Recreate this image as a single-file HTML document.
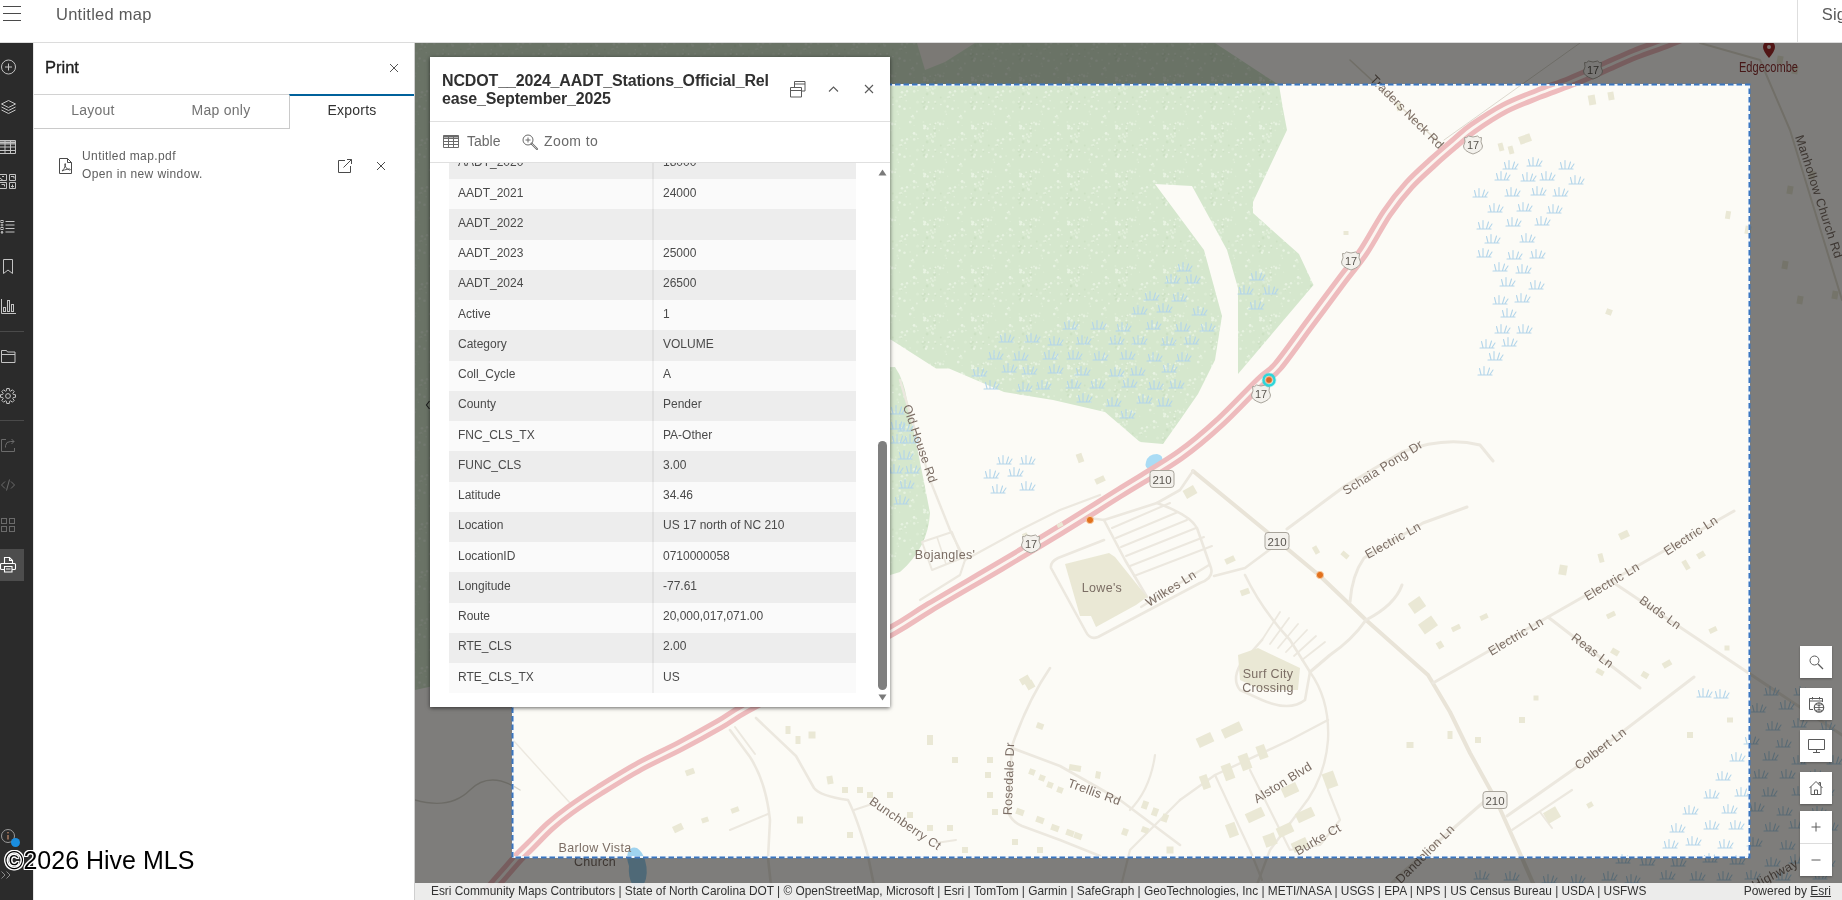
<!DOCTYPE html>
<html lang="en">
<head>
<meta charset="utf-8">
<title>Untitled map</title>
<style>
*{box-sizing:border-box;margin:0;padding:0}
html,body{width:1842px;height:900px;overflow:hidden;background:#fff}
body{position:relative;will-change:transform;font-family:"Liberation Sans",sans-serif;color:#4a4a4a;font-size:14px}
.abs{position:absolute}
/* header */
#hdr{left:0;top:0;width:1842px;height:43px;background:#fff;border-bottom:1px solid #dcdcdc}
#hdr .ttl{left:56px;top:4px;font-size:16.5px;line-height:20px;color:#5a5a5a;white-space:nowrap;letter-spacing:.25px}
#hdr .div{left:1797px;top:0;width:1px;height:42px;background:#dedede}
#hdr .sig{left:1821.7px;top:4px;font-size:16.5px;line-height:20px;color:#5a5a5a;white-space:nowrap;letter-spacing:.25px}
/* rail */
#rail{left:0;top:43px;width:33px;height:857px;background:#2b2b2b}
#rail svg{position:absolute;left:0;overflow:visible}
#rail .sep{position:absolute;left:0;width:24px;height:1px;background:#4a4a4a}
#rail .act{position:absolute;left:0;top:506px;width:24px;height:32px;background:#4d4d4d}
/* print panel */
#panel{left:33px;top:43px;width:382px;height:857px;background:#fff;border-right:1px solid #cfcfcf;border-left:1px solid #e6e6e6}
#panel .h{left:11px;top:14px;font-size:16.5px;line-height:20px;color:#1f1f1f;-webkit-text-stroke:.35px #1f1f1f}
#panel .hb{left:0;top:51px;width:380px;height:1px;background:#d2d2d2}
.tab{position:absolute;top:52px;height:34px;font-size:14px;line-height:31px;text-align:center;color:#727272;letter-spacing:.25px;border-bottom:1px solid #cacaca}
.tab.on{color:#323232;border-bottom:none;border-left:1px solid #cacaca;border-top:2px solid #00619b;top:51px;height:35px;line-height:28px}
#panel .f1{left:48px;top:105px;font-size:12px;line-height:16px;color:#5e5e5e;white-space:nowrap;letter-spacing:.41px}
#panel .f2{left:48px;top:123px;font-size:12px;line-height:16px;color:#5e5e5e;white-space:nowrap;letter-spacing:.39px}
/* map */
#map{left:415px;top:43px;width:1427px;height:857px;overflow:hidden;background:#faf8f1}
#attr{left:415px;top:883px;width:1427px;height:17px;background:rgba(255,255,255,.85);font-size:12px;line-height:17px;color:#323232;white-space:nowrap}
#attr .l{position:absolute;left:16px;top:0;font-size:11.88px}
#attr .r{position:absolute;right:11px;top:0}
#attr u{text-decoration:underline}
.mbtn{position:absolute;left:1800px;width:32px;height:32px;background:#fff;box-shadow:0 1px 2px rgba(0,0,0,.3)}
.mbtn svg{position:absolute;left:8px;top:8px}
/* popup */
#pop{left:430px;top:57px;width:460px;height:650px;background:#fff;box-shadow:0 1px 4px rgba(0,0,0,.6)}
#pop .t{left:12px;top:14.7px;width:340px;font-size:16px;line-height:18.3px;font-weight:bold;color:#303030;white-space:nowrap;letter-spacing:-.15px}
#pop .d1{left:0;top:64px;width:460px;height:1px;background:#e0e0e0}
#pop .d2{left:0;top:105px;width:460px;height:1px;background:#e0e0e0}
#pop .act{top:74px;font-size:14px;line-height:20px;color:#6a6a6a}
#tbl{left:19px;top:106px;width:407px;height:530px;overflow:hidden}
#tbl .in{position:absolute;left:0;top:-14.25px;width:407px}
.row{position:relative;height:30.25px;background:#fafafa;font-size:12px;line-height:30px;color:#4a4a4a;white-space:nowrap}
.row.g{background:#ededed}
.row b{font-weight:normal;position:absolute;left:9px;top:-1.5px}
.row i{font-style:normal;position:absolute;left:214px;top:-1.5px}
.row:after{content:"";position:absolute;left:203px;top:0;width:2px;height:100%;background:rgba(0,0,0,.05)}
#sb{left:445px;top:106px;width:15px;height:544px;background:#fff}
#sb .th{position:absolute;left:3px;top:278px;width:9px;height:249px;border-radius:5px;background:#7f7f7f}
#wm{left:5px;top:846px;font-size:25px;line-height:28px;color:#000;white-space:nowrap;letter-spacing:0;text-shadow:1px 0 0 #fff,-1px 0 0 #fff,0 1px 0 #fff,0 -1px 0 #fff,1px 1px 0 #fff,-1px -1px 0 #fff,1px -1px 0 #fff,-1px 1px 0 #fff}
</style>
</head>
<body>
<!-- MAP -->
<div id="map" class="abs">
<!--MAPSVG-->
<svg width="1427" height="857" viewBox="415 43 1427 857" style="position:absolute;left:0;top:0;font-family:'Liberation Sans',sans-serif">
<defs>
<pattern id="fp" width="48" height="48" patternUnits="userSpaceOnUse"><rect width="48" height="48" fill="#d5e7cd"/><circle cx="11.4" cy="26.1" r="1.0" fill="#dcecd4"/><circle cx="22.8" cy="27.9" r="1.2" fill="#cde1c4"/><circle cx="12.4" cy="11.2" r="1.5" fill="#cde1c4"/><circle cx="26.0" cy="26.4" r="1.0" fill="#e3f0dc"/><circle cx="11.1" cy="7.3" r="1.4" fill="#cde1c4"/><circle cx="35.6" cy="32.2" r="0.8" fill="#dcecd4"/><circle cx="2.1" cy="37.4" r="1.4" fill="#e9f4e3"/><circle cx="22.7" cy="34.5" r="1.4" fill="#cde1c4"/><circle cx="19.0" cy="38.4" r="1.1" fill="#e3f0dc"/><circle cx="42.2" cy="4.7" r="0.8" fill="#e3f0dc"/><circle cx="12.4" cy="32.3" r="1.3" fill="#e9f4e3"/><circle cx="20.2" cy="40.0" r="1.2" fill="#dcecd4"/><circle cx="28.1" cy="28.0" r="1.4" fill="#e6f2e0"/><circle cx="41.1" cy="47.6" r="1.2" fill="#e3f0dc"/><circle cx="33.5" cy="15.7" r="1.1" fill="#dcecd4"/><circle cx="27.3" cy="34.3" r="0.9" fill="#dcecd4"/><circle cx="12.8" cy="6.0" r="1.1" fill="#cde1c4"/><circle cx="4.2" cy="38.4" r="1.0" fill="#e3f0dc"/><circle cx="1.0" cy="20.5" r="1.0" fill="#e6f2e0"/><circle cx="2.1" cy="29.5" r="0.7" fill="#dcecd4"/><circle cx="15.9" cy="42.3" r="1.5" fill="#dcecd4"/><circle cx="11.3" cy="1.7" r="0.7" fill="#e6f2e0"/><circle cx="28.8" cy="1.5" r="0.9" fill="#cde1c4"/><circle cx="14.0" cy="12.6" r="1.3" fill="#e9f4e3"/><circle cx="15.1" cy="46.0" r="1.4" fill="#cde1c4"/><circle cx="18.1" cy="41.8" r="1.0" fill="#dcecd4"/><circle cx="32.7" cy="4.9" r="1.5" fill="#dcecd4"/><circle cx="13.0" cy="30.4" r="1.3" fill="#e9f4e3"/><circle cx="21.0" cy="12.4" r="0.9" fill="#e9f4e3"/><circle cx="0.5" cy="19.9" r="1.2" fill="#e6f2e0"/><circle cx="18.1" cy="28.3" r="0.8" fill="#e9f4e3"/><circle cx="22.4" cy="32.6" r="1.0" fill="#e9f4e3"/><circle cx="35.4" cy="1.1" r="0.7" fill="#e6f2e0"/><circle cx="46.2" cy="12.1" r="1.1" fill="#dcecd4"/><circle cx="28.9" cy="8.5" r="0.8" fill="#e9f4e3"/><circle cx="40.5" cy="12.7" r="1.3" fill="#e6f2e0"/><circle cx="37.1" cy="1.3" r="1.2" fill="#e3f0dc"/><circle cx="14.9" cy="10.7" r="1.3" fill="#e3f0dc"/><circle cx="15.7" cy="32.5" r="1.2" fill="#e6f2e0"/><circle cx="4.9" cy="15.5" r="1.0" fill="#e3f0dc"/><circle cx="21.0" cy="41.1" r="0.8" fill="#e9f4e3"/><circle cx="35.6" cy="10.5" r="1.2" fill="#e9f4e3"/><circle cx="10.8" cy="5.8" r="1.1" fill="#e3f0dc"/><circle cx="15.1" cy="40.1" r="1.2" fill="#e9f4e3"/><circle cx="16.3" cy="39.7" r="0.8" fill="#dcecd4"/><circle cx="16.6" cy="6.2" r="0.9" fill="#e9f4e3"/><circle cx="22.3" cy="30.4" r="0.9" fill="#dcecd4"/><circle cx="19.7" cy="44.2" r="0.8" fill="#e6f2e0"/><circle cx="22.9" cy="40.0" r="1.2" fill="#dcecd4"/><circle cx="20.8" cy="45.6" r="1.4" fill="#e3f0dc"/><circle cx="1.6" cy="21.9" r="1.3" fill="#dcecd4"/><circle cx="46.2" cy="26.1" r="1.4" fill="#e6f2e0"/><circle cx="41.2" cy="46.6" r="0.8" fill="#e3f0dc"/><circle cx="2.2" cy="43.4" r="1.3" fill="#e3f0dc"/><circle cx="43.0" cy="43.2" r="1.2" fill="#e6f2e0"/><circle cx="23.1" cy="5.8" r="1.1" fill="#e3f0dc"/><circle cx="31.8" cy="25.2" r="1.0" fill="#dcecd4"/><circle cx="5.5" cy="6.0" r="1.5" fill="#dcecd4"/><circle cx="22.9" cy="37.6" r="1.0" fill="#e3f0dc"/><circle cx="5.9" cy="42.6" r="0.8" fill="#e3f0dc"/><circle cx="38.0" cy="44.2" r="1.3" fill="#e6f2e0"/><circle cx="23.4" cy="27.4" r="1.0" fill="#e9f4e3"/><circle cx="11.9" cy="29.7" r="1.1" fill="#e6f2e0"/><circle cx="22.7" cy="37.3" r="0.7" fill="#e6f2e0"/><circle cx="37.2" cy="2.2" r="0.7" fill="#cde1c4"/><circle cx="46.8" cy="41.0" r="0.8" fill="#dcecd4"/><circle cx="23.5" cy="7.5" r="0.8" fill="#cde1c4"/><circle cx="31.1" cy="28.2" r="1.0" fill="#e3f0dc"/><circle cx="47.4" cy="20.6" r="0.8" fill="#e6f2e0"/><circle cx="34.4" cy="18.3" r="0.8" fill="#e3f0dc"/></pattern>
<g id="tf" fill="none" stroke="#b3d5ea" stroke-width="1.1" stroke-linecap="round"><path d="M-7 4h14M-4 3.500l-1.500-6M-1 3.500V-4.500M2.500 3.500l2-6.500M5 3.500l3-4.500"/></g>
<g id="sh17"><path d="M-8.5-6.5q2 1 4-1.5q4.5 2 9 0q2 2.500 4 1.500q-1.500 4.500 1 8.500q0 5-9.500 8q-9.500-3-9.500-8q2.500-4 1-8.500z" fill="#f3f1ec" stroke="#a9a59c" stroke-width="1"/><text x="0" y="4.500" font-size="11" text-anchor="middle" fill="#5a5650">17</text></g>
<g id="sh210"><rect x="-12" y="-8.500" width="24" height="17" rx="3" fill="#f3f1ec" stroke="#a9a59c" stroke-width="1"/><text x="0" y="4.500" font-size="11.500" text-anchor="middle" fill="#5a5650">210</text></g>
</defs>
<rect x="415" y="43" width="1427" height="857" fill="#fcfbf6"/>
<path d="M415 43H1215L1279 85L1283 109L1287 130L1253 202L1253 213L1299 254L1313.500 285L1238 374V288L1227 250L1192 186L1155 184L1204 250L1222 316L1215 360L1198 394L1180 420L1163 444L1140 442L1105 412L1053 400L1004 392L949 368.500L936 368.500L891.500 340L860 330V368L895 367Q904 380 907 400Q920 460 930 513Q928 548 900 572L760 615L415 690z" fill="url(#fp)"/>
<path d="M917 43L975 43L945 62L925 70z" fill="#f6f3ea"/>
<path d="M1146 462q2-8 11-8q7 1 5 8q-3 8-12 7q-6-1-4-7z" fill="#aadcf5"/>
<path d="M628 852q3-6 9-4q5 3 8 12q4 14-1 24q-6 6-12 0q-4-8-3-18q-3-8-1-14z" fill="#9fd3ef"/>
<path d="M1193 471L1266 531L1320 576L1366 620L1428 675L1450 712L1470 753L1496 800L1522 858L1536 890" fill="none" stroke="#e9e4d8" stroke-width="4" stroke-linecap="round" stroke-linejoin="round" />
<path d="M1287 529L1345 486L1402 452Q1444 436 1480 445L1493 461" fill="none" stroke="#ece8df" stroke-width="3" stroke-linecap="round" stroke-linejoin="round" />
<path d="M1350 602Q1352 575 1364 558L1423 523L1467 507" fill="none" stroke="#ece8df" stroke-width="3" stroke-linecap="round" stroke-linejoin="round" />
<path d="M1433 683L1548 617L1611 581L1734 511" fill="none" stroke="#ece8df" stroke-width="3" stroke-linecap="round" stroke-linejoin="round" />
<path d="M1548 617L1640 688" fill="none" stroke="#ece8df" stroke-width="3" stroke-linecap="round" stroke-linejoin="round" />
<path d="M1611 581L1747 672L1842 735" fill="none" stroke="#ece8df" stroke-width="3" stroke-linecap="round" stroke-linejoin="round" />
<path d="M1507 816L1574 769L1694 677" fill="none" stroke="#ece8df" stroke-width="3" stroke-linecap="round" stroke-linejoin="round" />
<path d="M1512 830L1572 790" fill="none" stroke="#ece8df" stroke-width="2.2" stroke-linecap="round" stroke-linejoin="round" />
<path d="M1540 812L1552 828" fill="none" stroke="#ece8df" stroke-width="2" stroke-linecap="round" stroke-linejoin="round" />
<path d="M1486 800L1402 873L1380 895" fill="none" stroke="#ece8df" stroke-width="3" stroke-linecap="round" stroke-linejoin="round" />
<path d="M1366 620Q1352 640 1330 655L1310 672" fill="none" stroke="#ece8df" stroke-width="3" stroke-linecap="round" stroke-linejoin="round" />
<path d="M1402 585Q1395 605 1366 620" fill="none" stroke="#ece8df" stroke-width="3" stroke-linecap="round" stroke-linejoin="round" />
<path d="M1350 60L1444 147" fill="none" stroke="#e3ded0" stroke-width="1.6" stroke-linecap="round" stroke-linejoin="round" />
<path d="M1444 140L1580 43" fill="none" stroke="#ddd9cf" stroke-width="1" stroke-linecap="round" stroke-linejoin="round" />
<path d="M1700 43L1760 60L1790 130L1842 300" fill="none" stroke="#e3ded0" stroke-width="2" stroke-linecap="round" stroke-linejoin="round" />
<path d="M900 380Q915 430 930 480L950 530L965 560" fill="none" stroke="#ece8df" stroke-width="2.4" stroke-linecap="round" stroke-linejoin="round" />
<path d="M965 560L1020 530L1060 510L1100 495" fill="none" stroke="#ece8df" stroke-width="2.2" stroke-linecap="round" stroke-linejoin="round" />
<path d="M920 600L960 575L965 560" fill="none" stroke="#ece8df" stroke-width="2.2" stroke-linecap="round" stroke-linejoin="round" />
<path d="M922 542L952 532L962 558L932 570z" fill="none" stroke="#ece8df" stroke-width="2" stroke-linecap="round" stroke-linejoin="round" />
<path d="M937 537L946 564" fill="none" stroke="#ece8df" stroke-width="1.6" stroke-linecap="round" stroke-linejoin="round" />
<path d="M1104 520L1157 503Q1190 515 1197 528L1211 568Q1214 578 1200 583L1098 637Q1090 640 1086 632L1051 568Q1050 562 1058 558L1104 540" fill="none" stroke="#ece8df" stroke-width="2.6" stroke-linecap="round" stroke-linejoin="round" />
<path d="M1104 520L1125 560L1147 597" fill="none" stroke="#ece8df" stroke-width="2.6" stroke-linecap="round" stroke-linejoin="round" />
<path d="M1112 528L1170 503" fill="none" stroke="#ece8df" stroke-width="2" stroke-linecap="round" stroke-linejoin="round" />
<path d="M1116 538L1178 512" fill="none" stroke="#ece8df" stroke-width="2" stroke-linecap="round" stroke-linejoin="round" />
<path d="M1121 547L1187 520" fill="none" stroke="#ece8df" stroke-width="2" stroke-linecap="round" stroke-linejoin="round" />
<path d="M1126 556L1196 528" fill="none" stroke="#ece8df" stroke-width="2" stroke-linecap="round" stroke-linejoin="round" />
<path d="M1130 566L1204 537" fill="none" stroke="#ece8df" stroke-width="2" stroke-linecap="round" stroke-linejoin="round" />
<path d="M1134 576L1212 546" fill="none" stroke="#ece8df" stroke-width="2" stroke-linecap="round" stroke-linejoin="round" />
<path d="M1089 518L1104 520" fill="none" stroke="#ece8df" stroke-width="2.4" stroke-linecap="round" stroke-linejoin="round" />
<path d="M1157 503L1180 490L1193 471" fill="none" stroke="#ece8df" stroke-width="2.6" stroke-linecap="round" stroke-linejoin="round" />
<path d="M1214 576L1245 568L1277 544" fill="none" stroke="#ece8df" stroke-width="2.6" stroke-linecap="round" stroke-linejoin="round" />
<path d="M1141 607L1209 565" fill="none" stroke="#ece8df" stroke-width="2.2" stroke-linecap="round" stroke-linejoin="round" />
<path d="M1245 575Q1262 610 1290 640L1310 672L1305 700Q1290 712 1262 700L1240 690Q1232 680 1240 665L1262 640" fill="none" stroke="#ece8df" stroke-width="2.6" stroke-linecap="round" stroke-linejoin="round" />
<path d="M1262 640L1280 612" fill="none" stroke="#ece8df" stroke-width="1.8" stroke-linecap="round" stroke-linejoin="round" />
<path d="M1270 644L1289 618" fill="none" stroke="#ece8df" stroke-width="1.8" stroke-linecap="round" stroke-linejoin="round" />
<path d="M1278 648L1298 624" fill="none" stroke="#ece8df" stroke-width="1.8" stroke-linecap="round" stroke-linejoin="round" />
<path d="M1286 652L1307 630" fill="none" stroke="#ece8df" stroke-width="1.8" stroke-linecap="round" stroke-linejoin="round" />
<path d="M1294 656L1316 636" fill="none" stroke="#ece8df" stroke-width="1.8" stroke-linecap="round" stroke-linejoin="round" />
<path d="M1302 660L1325 642" fill="none" stroke="#ece8df" stroke-width="1.8" stroke-linecap="round" stroke-linejoin="round" />
<path d="M1310 672Q1330 700 1328 740Q1325 780 1300 810L1270 850L1255 890" fill="none" stroke="#ece8df" stroke-width="2.4" stroke-linecap="round" stroke-linejoin="round" />
<path d="M1180 800L1215 775L1290 740L1328 720" fill="none" stroke="#ece8df" stroke-width="2.4" stroke-linecap="round" stroke-linejoin="round" />
<path d="M1215 775L1250 850L1262 880" fill="none" stroke="#ece8df" stroke-width="2.2" stroke-linecap="round" stroke-linejoin="round" />
<path d="M1180 800L1150 830L1130 850L1120 890" fill="none" stroke="#ece8df" stroke-width="2.2" stroke-linecap="round" stroke-linejoin="round" />
<path d="M1250 770L1290 850L1320 845L1340 820L1328 790" fill="none" stroke="#ece8df" stroke-width="2.2" stroke-linecap="round" stroke-linejoin="round" />
<path d="M1050 668Q1028 700 1012 746L1008 812Q1012 822 1022 826L1060 840L1100 856" fill="none" stroke="#ece8df" stroke-width="2.6" stroke-linecap="round" stroke-linejoin="round" />
<path d="M1012 748L1060 766L1120 800L1180 845" fill="none" stroke="#ece8df" stroke-width="2.6" stroke-linecap="round" stroke-linejoin="round" />
<path d="M1155 755Q1150 790 1130 810" fill="none" stroke="#ece8df" stroke-width="2.2" stroke-linecap="round" stroke-linejoin="round" />
<path d="M730 730L750 757Q766 782 770 820L768 858L772 895" fill="none" stroke="#ece8df" stroke-width="2.6" stroke-linecap="round" stroke-linejoin="round" />
<path d="M735 727L755 754" fill="none" stroke="#ece8df" stroke-width="2" stroke-linecap="round" stroke-linejoin="round" />
<path d="M756 718L796 756L814 788Q820 796 848 800Q856 815 868 856L876 895" fill="none" stroke="#ece8df" stroke-width="2.6" stroke-linecap="round" stroke-linejoin="round" />
<path d="M854 810L872 804" fill="none" stroke="#ece8df" stroke-width="2" stroke-linecap="round" stroke-linejoin="round" />
<path d="M730 830L768 814" fill="none" stroke="#ece8df" stroke-width="2" stroke-linecap="round" stroke-linejoin="round" />
<path d="M936 843L956 840" fill="none" stroke="#ece8df" stroke-width="2" stroke-linecap="round" stroke-linejoin="round" />
<path d="M513 740Q540 770 570 803" fill="none" stroke="#ece8df" stroke-width="1.4" stroke-linecap="round" stroke-linejoin="round" />
<path d="M415 800Q450 810 470 790Q490 770 520 790" fill="none" stroke="#d9d6cc" stroke-width="1.4" stroke-linecap="round" stroke-linejoin="round" />
<path d="M478 904C480.0 901.7 485.7 895.0 490 890C494.3 885.0 499.3 879.3 504 874C508.7 868.7 513.7 862.7 518 858C522.3 853.3 524.7 851.3 530 846C535.3 840.7 543.3 832.0 550 826C556.7 820.0 561.7 816.0 570 810C578.3 804.0 588.3 797.3 600 790C611.7 782.7 626.7 773.3 640 766C653.3 758.7 666.7 753.0 680 746C693.3 739.0 709.0 730.3 720 724C731.0 717.7 729.3 717.2 746 708C762.7 698.8 795.5 682.0 820 669C844.5 656.0 874.7 640.3 893 630C911.3 619.7 912.2 617.7 930 607C947.8 596.3 978.3 578.8 1000 566C1021.7 553.2 1040.0 542.2 1060 530C1080.0 517.8 1100.0 505.0 1120 492.5C1140.0 480.0 1163.3 466.8 1180 455C1196.7 443.2 1206.7 434.2 1220 422C1233.3 409.8 1250.3 391.3 1260 382C1269.7 372.7 1269.7 375.8 1278 366C1286.3 356.2 1299.3 337.3 1310 323C1320.7 308.7 1333.0 292.0 1342 280C1351.0 268.0 1356.5 262.2 1364 251C1371.5 239.8 1379.5 224.0 1387 213C1394.5 202.0 1401.3 193.5 1409 185C1416.7 176.5 1425.2 169.2 1433 162C1440.8 154.8 1449.3 147.7 1456 142C1462.7 136.3 1464.8 133.7 1473 128C1481.2 122.3 1494.2 113.7 1505 108C1515.8 102.3 1527.2 98.3 1538 94C1548.8 89.7 1559.2 86.3 1570 82C1580.8 77.7 1592.2 72.7 1603 68C1613.8 63.3 1624.7 58.2 1635 54C1645.3 49.8 1655.8 46.5 1665 43C1674.2 39.5 1685.8 34.7 1690 33" fill="none" stroke="#eebbbd" stroke-width="12.600" stroke-linejoin="round"/>
<path d="M478 904C480.0 901.7 485.7 895.0 490 890C494.3 885.0 499.3 879.3 504 874C508.7 868.7 513.7 862.7 518 858C522.3 853.3 524.7 851.3 530 846C535.3 840.7 543.3 832.0 550 826C556.7 820.0 561.7 816.0 570 810C578.3 804.0 588.3 797.3 600 790C611.7 782.7 626.7 773.3 640 766C653.3 758.7 666.7 753.0 680 746C693.3 739.0 709.0 730.3 720 724C731.0 717.7 729.3 717.2 746 708C762.7 698.8 795.5 682.0 820 669C844.5 656.0 874.7 640.3 893 630C911.3 619.7 912.2 617.7 930 607C947.8 596.3 978.3 578.8 1000 566C1021.7 553.2 1040.0 542.2 1060 530C1080.0 517.8 1100.0 505.0 1120 492.5C1140.0 480.0 1163.3 466.8 1180 455C1196.7 443.2 1206.7 434.2 1220 422C1233.3 409.8 1250.3 391.3 1260 382C1269.7 372.7 1269.7 375.8 1278 366C1286.3 356.2 1299.3 337.3 1310 323C1320.7 308.7 1333.0 292.0 1342 280C1351.0 268.0 1356.5 262.2 1364 251C1371.5 239.8 1379.5 224.0 1387 213C1394.5 202.0 1401.3 193.5 1409 185C1416.7 176.5 1425.2 169.2 1433 162C1440.8 154.8 1449.3 147.7 1456 142C1462.7 136.3 1464.8 133.7 1473 128C1481.2 122.3 1494.2 113.7 1505 108C1515.8 102.3 1527.2 98.3 1538 94C1548.8 89.7 1559.2 86.3 1570 82C1580.8 77.7 1592.2 72.7 1603 68C1613.8 63.3 1624.7 58.2 1635 54C1645.3 49.8 1655.8 46.5 1665 43C1674.2 39.5 1685.8 34.7 1690 33" fill="none" stroke="#fbf6f1" stroke-width="2.800" stroke-linejoin="round"/>
<path d="M1065 564L1109 553L1115 557L1147 597L1136 605L1096 627L1091 616L1080 616z" fill="#eae8d5"/>
<path d="M1238 655L1258 648L1300 668L1298 690L1262 690L1240 680z" fill="#eae8d5"/>
<rect x="-3.0" y="-4.5" width="6" height="9" fill="#eae8d5" transform="translate(1080 458) rotate(-20)"/>
<rect x="-5.0" y="-3.0" width="10" height="6" fill="#eae8d5" transform="translate(1100 480) rotate(-25)"/>
<rect x="-6.0" y="-4.5" width="12" height="9" fill="#eae8d5" transform="translate(1190 492) rotate(-30)"/>
<rect x="-5.0" y="-3.0" width="10" height="6" fill="#eae8d5" transform="translate(1230 560) rotate(-25)"/>
<rect x="-4.5" y="-3.0" width="9" height="6" fill="#eae8d5" transform="translate(1245 592) rotate(-20)"/>
<rect x="-2.5" y="-4.0" width="5" height="8" fill="#eae8d5" transform="translate(1316 550) rotate(-30)"/>
<rect x="-4.0" y="-2.5" width="8" height="5" fill="#eae8d5" transform="translate(1345 555) rotate(40)"/>
<rect x="-7.0" y="-6.0" width="14" height="12" fill="#eae8d5" transform="translate(1417 605) rotate(-35)"/>
<rect x="-8.0" y="-6.0" width="16" height="12" fill="#eae8d5" transform="translate(1428 625) rotate(-35)"/>
<rect x="-4.5" y="-2.5" width="9" height="5" fill="#eae8d5" transform="translate(1456 628) rotate(-25)"/>
<rect x="-4.0" y="-2.5" width="8" height="5" fill="#eae8d5" transform="translate(1484 617) rotate(-25)"/>
<rect x="-3.0" y="-3.5" width="6" height="7" fill="#eae8d5" transform="translate(1440 645) rotate(-30)"/>
<rect x="-4.0" y="-5.0" width="8" height="10" fill="#eae8d5" transform="translate(1563 570) rotate(10)"/>
<rect x="-2.5" y="-4.5" width="5" height="9" fill="#eae8d5" transform="translate(1601 558) rotate(-15)"/>
<rect x="-5.0" y="-3.5" width="10" height="7" fill="#eae8d5" transform="translate(1624 535) rotate(-25)"/>
<rect x="-2.5" y="-5.0" width="5" height="10" fill="#eae8d5" transform="translate(1686 565) rotate(-30)"/>
<rect x="-4.0" y="-3.0" width="8" height="6" fill="#eae8d5" transform="translate(1701 555) rotate(-30)"/>
<rect x="-4.5" y="-2.5" width="9" height="5" fill="#eae8d5" transform="translate(1611 615) rotate(-25)"/>
<rect x="-4.0" y="-2.5" width="8" height="5" fill="#eae8d5" transform="translate(1713 630) rotate(-25)"/>
<rect x="-2.5" y="-2.5" width="5" height="5" fill="#eae8d5" transform="translate(1727 648) rotate(0)"/>
<rect x="-4.0" y="-3.0" width="8" height="6" fill="#eae8d5" transform="translate(1615 652) rotate(30)"/>
<rect x="-4.5" y="-3.0" width="9" height="6" fill="#eae8d5" transform="translate(1667 664) rotate(-30)"/>
<rect x="-3.5" y="-3.0" width="7" height="6" fill="#eae8d5" transform="translate(1645 675) rotate(30)"/>
<rect x="-4.0" y="-2.5" width="8" height="5" fill="#eae8d5" transform="translate(1600 672) rotate(30)"/>
<rect x="-2.5" y="-4.0" width="5" height="8" fill="#eae8d5" transform="translate(1399 107) rotate(-10)"/>
<rect x="-3.5" y="-5.0" width="7" height="10" fill="#eae8d5" transform="translate(1592 100) rotate(-10)"/>
<rect x="-3.0" y="-4.0" width="6" height="8" fill="#eae8d5" transform="translate(1611 96) rotate(-10)"/>
<rect x="-6.0" y="-4.0" width="12" height="8" fill="#eae8d5" transform="translate(1525 139) rotate(-20)"/>
<rect x="-2.5" y="-4.0" width="5" height="8" fill="#eae8d5" transform="translate(1501 147) rotate(-15)"/>
<rect x="-2.5" y="-4.0" width="5" height="8" fill="#eae8d5" transform="translate(1511 150) rotate(-15)"/>
<rect x="-3.0" y="-3.0" width="6" height="6" fill="#eae8d5" transform="translate(1609 312) rotate(20)"/>
<rect x="-2.5" y="-2.0" width="5" height="4" fill="#eae8d5" transform="translate(1346 233) rotate(0)"/>
<rect x="-5.0" y="-3.5" width="10" height="7" fill="#eae8d5" transform="translate(1025 680) rotate(-30)"/>
<rect x="-3.5" y="-3.0" width="7" height="6" fill="#eae8d5" transform="translate(1040 726) rotate(20)"/>
<rect x="-4.0" y="-4.0" width="8" height="8" fill="#eae8d5" transform="translate(1030 685) rotate(-30)"/>
<rect x="-8.0" y="-5.0" width="16" height="10" fill="#eae8d5" transform="translate(1205 740) rotate(-25)"/>
<rect x="-10.0" y="-5.0" width="20" height="10" fill="#eae8d5" transform="translate(1232 730) rotate(-25)"/>
<rect x="-4.0" y="-7.0" width="8" height="14" fill="#eae8d5" transform="translate(1205 782) rotate(-20)"/>
<rect x="-5.0" y="-8.0" width="10" height="16" fill="#eae8d5" transform="translate(1228 772) rotate(-20)"/>
<rect x="-5.0" y="-8.0" width="10" height="16" fill="#eae8d5" transform="translate(1245 762) rotate(-20)"/>
<rect x="-4.5" y="-7.0" width="9" height="14" fill="#eae8d5" transform="translate(1262 752) rotate(-20)"/>
<rect x="-9.0" y="-5.0" width="18" height="10" fill="#eae8d5" transform="translate(1255 815) rotate(-25)"/>
<rect x="-5.0" y="-7.0" width="10" height="14" fill="#eae8d5" transform="translate(1232 830) rotate(-20)"/>
<rect x="-8.0" y="-5.0" width="16" height="10" fill="#eae8d5" transform="translate(1290 790) rotate(-25)"/>
<rect x="-9.0" y="-5.0" width="18" height="10" fill="#eae8d5" transform="translate(1305 815) rotate(-25)"/>
<rect x="-8.0" y="-5.0" width="16" height="10" fill="#eae8d5" transform="translate(1285 830) rotate(-25)"/>
<rect x="-6.0" y="-8.0" width="12" height="16" fill="#eae8d5" transform="translate(1330 780) rotate(-20)"/>
<rect x="-6.0" y="-6.0" width="12" height="12" fill="#eae8d5" transform="translate(1270 840) rotate(-20)"/>
<rect x="-8.0" y="-5.0" width="16" height="10" fill="#eae8d5" transform="translate(1300 845) rotate(-25)"/>
<rect x="-3.0" y="-3.0" width="6" height="6" fill="#eae8d5" transform="translate(1032 772) rotate(20)"/>
<rect x="-3.0" y="-3.0" width="6" height="6" fill="#eae8d5" transform="translate(1042 778) rotate(20)"/>
<rect x="-3.0" y="-3.0" width="6" height="6" fill="#eae8d5" transform="translate(1050 785) rotate(20)"/>
<rect x="-3.0" y="-3.0" width="6" height="6" fill="#eae8d5" transform="translate(1060 790) rotate(20)"/>
<rect x="-6.0" y="-3.0" width="12" height="6" fill="#eae8d5" transform="translate(1075 768) rotate(10)"/>
<rect x="-2.5" y="-3.5" width="5" height="7" fill="#eae8d5" transform="translate(1098 775) rotate(10)"/>
<rect x="-3.0" y="-4.0" width="6" height="8" fill="#eae8d5" transform="translate(1145 805) rotate(20)"/>
<rect x="-3.0" y="-4.0" width="6" height="8" fill="#eae8d5" transform="translate(1155 812) rotate(20)"/>
<rect x="-3.0" y="-4.0" width="6" height="8" fill="#eae8d5" transform="translate(1165 818) rotate(20)"/>
<rect x="-3.0" y="-3.0" width="6" height="6" fill="#eae8d5" transform="translate(990 760) rotate(0)"/>
<rect x="-3.0" y="-3.0" width="6" height="6" fill="#eae8d5" transform="translate(988 775) rotate(0)"/>
<rect x="-3.0" y="-3.0" width="6" height="6" fill="#eae8d5" transform="translate(990 795) rotate(0)"/>
<rect x="-3.0" y="-3.0" width="6" height="6" fill="#eae8d5" transform="translate(995 812) rotate(0)"/>
<rect x="-4.0" y="-3.0" width="8" height="6" fill="#eae8d5" transform="translate(1020 812) rotate(20)"/>
<rect x="-4.0" y="-3.0" width="8" height="6" fill="#eae8d5" transform="translate(1040 820) rotate(20)"/>
<rect x="-4.0" y="-3.0" width="8" height="6" fill="#eae8d5" transform="translate(1055 828) rotate(20)"/>
<rect x="-4.0" y="-3.0" width="8" height="6" fill="#eae8d5" transform="translate(1070 833) rotate(20)"/>
<rect x="-4.0" y="-3.0" width="8" height="6" fill="#eae8d5" transform="translate(1078 836) rotate(20)"/>
<rect x="-3.0" y="-3.0" width="6" height="6" fill="#eae8d5" transform="translate(890 795) rotate(0)"/>
<rect x="-3.0" y="-3.0" width="6" height="6" fill="#eae8d5" transform="translate(910 815) rotate(0)"/>
<rect x="-3.0" y="-3.0" width="6" height="6" fill="#eae8d5" transform="translate(930 828) rotate(0)"/>
<rect x="-3.0" y="-3.0" width="6" height="6" fill="#eae8d5" transform="translate(950 828) rotate(0)"/>
<rect x="-3.0" y="-3.0" width="6" height="6" fill="#eae8d5" transform="translate(965 850) rotate(0)"/>
<rect x="-3.0" y="-3.0" width="6" height="6" fill="#eae8d5" transform="translate(1015 842) rotate(0)"/>
<rect x="-3.0" y="-3.0" width="6" height="6" fill="#eae8d5" transform="translate(1040 850) rotate(0)"/>
<rect x="-3.0" y="-3.5" width="6" height="7" fill="#eae8d5" transform="translate(1125 832) rotate(20)"/>
<rect x="-3.5" y="-3.0" width="7" height="6" fill="#eae8d5" transform="translate(1145 830) rotate(20)"/>
<rect x="-3.5" y="-3.5" width="7" height="7" fill="#eae8d5" transform="translate(1170 850) rotate(0)"/>
<rect x="-4.5" y="-3.0" width="9" height="6" fill="#eae8d5" transform="translate(690 772) rotate(-20)"/>
<rect x="-5.0" y="-3.5" width="10" height="7" fill="#eae8d5" transform="translate(678 828) rotate(-25)"/>
<rect x="-2.5" y="-4.0" width="5" height="8" fill="#eae8d5" transform="translate(788 730) rotate(0)"/>
<rect x="-2.5" y="-4.0" width="5" height="8" fill="#eae8d5" transform="translate(798 740) rotate(0)"/>
<rect x="-3.5" y="-3.5" width="7" height="7" fill="#eae8d5" transform="translate(812 735) rotate(0)"/>
<rect x="-3.0" y="-4.0" width="6" height="8" fill="#eae8d5" transform="translate(830 780) rotate(-10)"/>
<rect x="-3.0" y="-3.0" width="6" height="6" fill="#eae8d5" transform="translate(845 790) rotate(0)"/>
<rect x="-3.0" y="-3.0" width="6" height="6" fill="#eae8d5" transform="translate(860 790) rotate(0)"/>
<rect x="-3.0" y="-3.0" width="6" height="6" fill="#eae8d5" transform="translate(870 795) rotate(0)"/>
<rect x="-3.0" y="-3.5" width="6" height="7" fill="#eae8d5" transform="translate(800 820) rotate(0)"/>
<rect x="-3.0" y="-3.0" width="6" height="6" fill="#eae8d5" transform="translate(850 835) rotate(0)"/>
<rect x="-3.0" y="-5.0" width="6" height="10" fill="#eae8d5" transform="translate(930 740) rotate(0)"/>
<rect x="-3.0" y="-3.0" width="6" height="6" fill="#eae8d5" transform="translate(955 760) rotate(0)"/>
<rect x="-4.0" y="-2.5" width="8" height="5" fill="#eae8d5" transform="translate(735 810) rotate(-20)"/>
<rect x="-3.5" y="-2.5" width="7" height="5" fill="#eae8d5" transform="translate(705 820) rotate(-20)"/>
<rect x="-3.5" y="-3.0" width="7" height="6" fill="#eae8d5" transform="translate(1410 745) rotate(0)"/>
<rect x="-2.5" y="-4.0" width="5" height="8" fill="#eae8d5" transform="translate(1450 735) rotate(0)"/>
<rect x="-3.0" y="-3.0" width="6" height="6" fill="#eae8d5" transform="translate(1478 740) rotate(0)"/>
<rect x="-3.0" y="-3.0" width="6" height="6" fill="#eae8d5" transform="translate(1522 720) rotate(0)"/>
<rect x="-2.5" y="-2.5" width="5" height="5" fill="#eae8d5" transform="translate(1536 698) rotate(0)"/>
<rect x="-7.0" y="-6.0" width="14" height="12" fill="#eae8d5" transform="translate(1552 815) rotate(-30)"/>
<rect x="-3.0" y="-2.5" width="6" height="5" fill="#eae8d5" transform="translate(1590 805) rotate(-30)"/>
<rect x="-3.0" y="-3.0" width="6" height="6" fill="#eae8d5" transform="translate(1690 735) rotate(0)"/>
<rect x="-3.0" y="-2.5" width="6" height="5" fill="#eae8d5" transform="translate(1730 720) rotate(0)"/>
<rect x="-3.0" y="-2.0" width="6" height="4" fill="#eae8d5" transform="translate(1060 525) rotate(-25)"/>
<rect x="-2.5" y="-2.0" width="5" height="4" fill="#eae8d5" transform="translate(1025 535) rotate(-25)"/>
<rect x="-2.5" y="-4.0" width="5" height="8" fill="#eae8d5" transform="translate(1728 215) rotate(10)"/>
<rect x="-3.0" y="-4.0" width="6" height="8" fill="#eae8d5" transform="translate(1748 230) rotate(10)"/>
<rect x="-3.0" y="-4.0" width="6" height="8" fill="#eae8d5" transform="translate(1790 190) rotate(10)"/>
<rect x="-3.0" y="-4.0" width="6" height="8" fill="#eae8d5" transform="translate(1812 175) rotate(10)"/>
<rect x="-3.0" y="-4.0" width="6" height="8" fill="#eae8d5" transform="translate(1785 265) rotate(10)"/>
<rect x="-3.0" y="-4.0" width="6" height="8" fill="#eae8d5" transform="translate(1800 300) rotate(10)"/>
<rect x="-3.0" y="-4.0" width="6" height="8" fill="#eae8d5" transform="translate(1835 295) rotate(10)"/>
<rect x="-3.0" y="-4.0" width="6" height="8" fill="#eae8d5" transform="translate(1780 60) rotate(10)"/>
<rect x="-3.0" y="-4.0" width="6" height="8" fill="#eae8d5" transform="translate(1795 70) rotate(10)"/>
<use href="#tf" x="1510" y="165"/>
<use href="#tf" x="1534" y="162"/>
<use href="#tf" x="1566" y="165"/>
<use href="#tf" x="1502" y="176"/>
<use href="#tf" x="1528" y="177"/>
<use href="#tf" x="1547" y="176"/>
<use href="#tf" x="1576" y="180"/>
<use href="#tf" x="1480" y="193"/>
<use href="#tf" x="1512" y="192"/>
<use href="#tf" x="1538" y="191"/>
<use href="#tf" x="1560" y="192"/>
<use href="#tf" x="1495" y="208"/>
<use href="#tf" x="1524" y="207"/>
<use href="#tf" x="1554" y="209"/>
<use href="#tf" x="1484" y="225"/>
<use href="#tf" x="1513" y="222"/>
<use href="#tf" x="1542" y="221"/>
<use href="#tf" x="1492" y="239"/>
<use href="#tf" x="1527" y="238"/>
<use href="#tf" x="1484" y="253"/>
<use href="#tf" x="1514" y="255"/>
<use href="#tf" x="1537" y="254"/>
<use href="#tf" x="1500" y="267"/>
<use href="#tf" x="1523" y="269"/>
<use href="#tf" x="1507" y="282"/>
<use href="#tf" x="1536" y="285"/>
<use href="#tf" x="1500" y="300"/>
<use href="#tf" x="1522" y="298"/>
<use href="#tf" x="1508" y="313"/>
<use href="#tf" x="1502" y="329"/>
<use href="#tf" x="1524" y="329"/>
<use href="#tf" x="1487" y="344"/>
<use href="#tf" x="1509" y="342"/>
<use href="#tf" x="1495" y="356"/>
<use href="#tf" x="1485" y="371"/>
<use href="#tf" x="1184" y="267"/>
<use href="#tf" x="1172" y="279"/>
<use href="#tf" x="1192" y="279"/>
<use href="#tf" x="1151" y="296"/>
<use href="#tf" x="1179" y="297"/>
<use href="#tf" x="1139" y="310"/>
<use href="#tf" x="1164" y="308"/>
<use href="#tf" x="1199" y="311"/>
<use href="#tf" x="1070" y="325"/>
<use href="#tf" x="1098" y="325"/>
<use href="#tf" x="1123" y="327"/>
<use href="#tf" x="1153" y="325"/>
<use href="#tf" x="1182" y="327"/>
<use href="#tf" x="1207" y="327"/>
<use href="#tf" x="1006" y="338"/>
<use href="#tf" x="1032" y="338"/>
<use href="#tf" x="1055" y="341"/>
<use href="#tf" x="1083" y="340"/>
<use href="#tf" x="1116" y="340"/>
<use href="#tf" x="1139" y="340"/>
<use href="#tf" x="1168" y="341"/>
<use href="#tf" x="1191" y="340"/>
<use href="#tf" x="995" y="355"/>
<use href="#tf" x="1020" y="356"/>
<use href="#tf" x="1050" y="355"/>
<use href="#tf" x="1074" y="355"/>
<use href="#tf" x="1100" y="356"/>
<use href="#tf" x="1127" y="355"/>
<use href="#tf" x="1154" y="357"/>
<use href="#tf" x="1183" y="357"/>
<use href="#tf" x="979" y="372"/>
<use href="#tf" x="1009" y="368"/>
<use href="#tf" x="1029" y="370"/>
<use href="#tf" x="1055" y="369"/>
<use href="#tf" x="1082" y="371"/>
<use href="#tf" x="1116" y="372"/>
<use href="#tf" x="1137" y="371"/>
<use href="#tf" x="1169" y="368"/>
<use href="#tf" x="991" y="385"/>
<use href="#tf" x="1024" y="387"/>
<use href="#tf" x="1043" y="385"/>
<use href="#tf" x="1073" y="384"/>
<use href="#tf" x="1097" y="384"/>
<use href="#tf" x="1129" y="383"/>
<use href="#tf" x="1155" y="385"/>
<use href="#tf" x="1176" y="384"/>
<use href="#tf" x="1084" y="398"/>
<use href="#tf" x="1113" y="402"/>
<use href="#tf" x="1144" y="399"/>
<use href="#tf" x="1164" y="402"/>
<use href="#tf" x="1127" y="414"/>
<use href="#tf" x="1257" y="276"/>
<use href="#tf" x="1245" y="290"/>
<use href="#tf" x="1270" y="290"/>
<use href="#tf" x="1256" y="305"/>
<use href="#tf" x="1004" y="460"/>
<use href="#tf" x="1027" y="460"/>
<use href="#tf" x="991" y="474"/>
<use href="#tf" x="1015" y="472"/>
<use href="#tf" x="998" y="489"/>
<use href="#tf" x="1027" y="486"/>
<use href="#tf" x="897" y="410"/>
<use href="#tf" x="897" y="425"/>
<use href="#tf" x="905" y="427"/>
<use href="#tf" x="898" y="439"/>
<use href="#tf" x="911" y="439"/>
<use href="#tf" x="905" y="455"/>
<use href="#tf" x="895" y="469"/>
<use href="#tf" x="912" y="469"/>
<use href="#tf" x="906" y="484"/>
<use href="#tf" x="901" y="500"/>
<use href="#tf" x="1704" y="693"/>
<use href="#tf" x="1721" y="694"/>
<use href="#tf" x="1771" y="691"/>
<use href="#tf" x="1801" y="691"/>
<use href="#tf" x="1758" y="708"/>
<use href="#tf" x="1786" y="705"/>
<use href="#tf" x="1811" y="706"/>
<use href="#tf" x="1773" y="726"/>
<use href="#tf" x="1799" y="723"/>
<use href="#tf" x="1827" y="726"/>
<use href="#tf" x="1751" y="740"/>
<use href="#tf" x="1783" y="743"/>
<use href="#tf" x="1810" y="742"/>
<use href="#tf" x="1737" y="757"/>
<use href="#tf" x="1770" y="756"/>
<use href="#tf" x="1799" y="760"/>
<use href="#tf" x="1834" y="760"/>
<use href="#tf" x="1723" y="776"/>
<use href="#tf" x="1760" y="774"/>
<use href="#tf" x="1787" y="774"/>
<use href="#tf" x="1816" y="774"/>
<use href="#tf" x="1711" y="794"/>
<use href="#tf" x="1742" y="792"/>
<use href="#tf" x="1769" y="792"/>
<use href="#tf" x="1799" y="791"/>
<use href="#tf" x="1826" y="791"/>
<use href="#tf" x="1690" y="810"/>
<use href="#tf" x="1729" y="809"/>
<use href="#tf" x="1756" y="807"/>
<use href="#tf" x="1784" y="811"/>
<use href="#tf" x="1818" y="811"/>
<use href="#tf" x="1677" y="828"/>
<use href="#tf" x="1711" y="825"/>
<use href="#tf" x="1736" y="825"/>
<use href="#tf" x="1771" y="827"/>
<use href="#tf" x="1796" y="824"/>
<use href="#tf" x="1830" y="826"/>
<use href="#tf" x="1670" y="844"/>
<use href="#tf" x="1693" y="841"/>
<use href="#tf" x="1725" y="844"/>
<use href="#tf" x="1754" y="842"/>
<use href="#tf" x="1787" y="845"/>
<use href="#tf" x="1812" y="841"/>
<use href="#tf" x="1623" y="859"/>
<use href="#tf" x="1647" y="861"/>
<use href="#tf" x="1678" y="862"/>
<use href="#tf" x="1710" y="858"/>
<use href="#tf" x="1737" y="860"/>
<use href="#tf" x="1772" y="862"/>
<use href="#tf" x="1796" y="859"/>
<use href="#tf" x="1827" y="862"/>
<use href="#tf" x="1481" y="875"/>
<use href="#tf" x="1511" y="876"/>
<use href="#tf" x="1549" y="879"/>
<use href="#tf" x="1577" y="879"/>
<use href="#tf" x="1609" y="876"/>
<use href="#tf" x="1632" y="879"/>
<use href="#tf" x="1667" y="875"/>
<use href="#tf" x="1697" y="876"/>
<use href="#tf" x="1724" y="876"/>
<use href="#tf" x="1752" y="875"/>
<use href="#tf" x="1783" y="876"/>
<use href="#tf" x="1820" y="875"/>
<use href="#sh17" x="1593" y="69"/>
<use href="#sh17" x="1473" y="144"/>
<use href="#sh17" x="1351" y="260"/>
<use href="#sh17" x="1261" y="393"/>
<use href="#sh17" x="1031" y="543"/>
<use href="#sh210" x="1162" y="479"/>
<use href="#sh210" x="1277" y="541"/>
<use href="#sh210" x="1495" y="800"/>
<text transform="translate(1404 115) rotate(45)" font-size="12.5" text-anchor="middle" fill="#7b6d64" letter-spacing="0.3" >Traders Neck Rd</text>
<text transform="translate(1815 198) rotate(72)" font-size="12.5" text-anchor="middle" fill="#7b6d64" letter-spacing="0.3" >Manhollow Church Rd</text>
<text transform="translate(916 445) rotate(71)" font-size="12.5" text-anchor="middle" fill="#7b6d64" letter-spacing="0.3" >Old House Rd</text>
<text transform="translate(1385 471) rotate(-32)" font-size="12.5" text-anchor="middle" fill="#7b6d64" letter-spacing="0.3" >Schaia Pong Dr</text>
<text transform="translate(1395 544) rotate(-29)" font-size="12.5" text-anchor="middle" fill="#7b6d64" letter-spacing="0.3" >Electric Ln</text>
<text transform="translate(1693 539) rotate(-33)" font-size="12.5" text-anchor="middle" fill="#7b6d64" letter-spacing="0.3" >Electric Ln</text>
<text transform="translate(1614 585) rotate(-31)" font-size="12.5" text-anchor="middle" fill="#7b6d64" letter-spacing="0.3" >Electric Ln</text>
<text transform="translate(1518 640) rotate(-31)" font-size="12.5" text-anchor="middle" fill="#7b6d64" letter-spacing="0.3" >Electric Ln</text>
<text transform="translate(1658 616) rotate(36)" font-size="12.5" text-anchor="middle" fill="#7b6d64" letter-spacing="0.3" >Buds Ln</text>
<text transform="translate(1590 654) rotate(37)" font-size="12.5" text-anchor="middle" fill="#7b6d64" letter-spacing="0.3" >Reas Ln</text>
<text transform="translate(1603 752) rotate(-37)" font-size="12.5" text-anchor="middle" fill="#7b6d64" letter-spacing="0.3" >Colbert Ln</text>
<text transform="translate(1173 592) rotate(-32)" font-size="12.5" text-anchor="middle" fill="#7b6d64" letter-spacing="0.3" >Wilkes Ln</text>
<text transform="translate(1102 592) rotate(0)" font-size="12.5" text-anchor="middle" fill="#7b6d64" letter-spacing="0.3" >Lowe&#39;s</text>
<text transform="translate(945 559) rotate(0)" font-size="12.5" text-anchor="middle" fill="#7b6d64" letter-spacing="0.3" >Bojangles&#39;</text>
<text transform="translate(1268 678) rotate(0)" font-size="12.5" text-anchor="middle" fill="#7b6d64" letter-spacing="0.3" >Surf City</text>
<text transform="translate(1268 692) rotate(0)" font-size="12.5" text-anchor="middle" fill="#7b6d64" letter-spacing="0.3" >Crossing</text>
<text transform="translate(1285 786) rotate(-32)" font-size="12.5" text-anchor="middle" fill="#7b6d64" letter-spacing="0.3" >Alston Blvd</text>
<text transform="translate(1320 843) rotate(-30)" font-size="12.5" text-anchor="middle" fill="#7b6d64" letter-spacing="0.3" >Burke Ct</text>
<text transform="translate(1093 796) rotate(20)" font-size="12.5" text-anchor="middle" fill="#7b6d64" letter-spacing="0.3" >Trellis Rd</text>
<text transform="translate(1013 779) rotate(-88)" font-size="12.5" text-anchor="middle" fill="#7b6d64" letter-spacing="0.3" >Rosedale Dr</text>
<text transform="translate(903 827) rotate(34.5)" font-size="12.5" text-anchor="middle" fill="#7b6d64" letter-spacing="0.3" >Bunchberry Ct</text>
<text transform="translate(1428 857) rotate(-45)" font-size="12.5" text-anchor="middle" fill="#7b6d64" letter-spacing="0.3" >Dandelion Ln</text>
<text transform="translate(595 852) rotate(0)" font-size="12.5" text-anchor="middle" fill="#7b6d64" letter-spacing="0.3" >Barlow Vista</text>
<text transform="translate(595 866) rotate(0)" font-size="12.5" text-anchor="middle" fill="#7b6d64" letter-spacing="0.3" >Church</text>
<text transform="translate(1799 866) rotate(-28)" font-size="12.5" text-anchor="middle" fill="#7b6d64" letter-spacing="0.3" style="text-anchor:end">Highway</text>
<text transform="translate(1768.5 72) rotate(0)" font-size="14" text-anchor="middle" fill="#8c2f2f" letter-spacing="0" textLength="59" lengthAdjust="spacingAndGlyphs">Edgecombe</text>
<path d="M1769 58q-6-7-6-11a6 6 0 0 1 12 0q0 4-6 11z" fill="#a32a2a"/><circle cx="1769" cy="47" r="2" fill="#f4e6e0"/>
<circle cx="1090" cy="520" r="3.600" fill="#e2711d" stroke="#f7c9a0" stroke-width="1"/>
<circle cx="1320" cy="575" r="3.600" fill="#e2711d" stroke="#f7c9a0" stroke-width="1"/>
<circle cx="1269" cy="380" r="7.500" fill="#5fe0e0" fill-opacity=".3"/>
<circle cx="1269" cy="380" r="5.500" fill="none" stroke="#2fd5d8" stroke-width="2.400"/>
<circle cx="1269" cy="380" r="3.400" fill="#d9672a" stroke="#f7c9a0" stroke-width=".8"/>
<path d="M429.500 401l-3 4l3 4" fill="none" stroke="#3a3a3a" stroke-width="1.200"/>
<path d="M415 43H1842V900H415zM513 85V857H1749V85z" fill="#000" fill-opacity=".5" fill-rule="evenodd"/>
<rect x="513" y="85" width="1236" height="772" fill="none" stroke="#eef5fc" stroke-width="2"/>
<rect x="512.500" y="84.500" width="1237" height="773" fill="none" stroke="#3b76bf" stroke-width="2" stroke-dasharray="5.500 3"/>
</svg>
<!--/MAPSVG-->
</div>
<div id="attr" class="abs"><span class="l">Esri Community Maps Contributors | State of North Carolina DOT | © OpenStreetMap, Microsoft | Esri | TomTom | Garmin | SafeGraph | GeoTechnologies, Inc | METI/NASA | USGS | EPA | NPS | US Census Bureau | USDA | USFWS</span><span class="r">Powered by <u>Esri</u></span></div>

<!--MAPBTNS-->
<div class="mbtn" style="top:646px"><svg width="16" height="16" viewBox="0 0 16 16" stroke="#5a5a5a" fill="none" stroke-width="1"><circle cx="6.500" cy="6.500" r="4.500"/><path d="M10 10l5 5" stroke-width="1.300"/></svg></div>
<div class="mbtn" style="top:688px"><svg width="17" height="17" viewBox="0 0 17 17" stroke="#5a5a5a" fill="none" stroke-width="1"><path d="M5 13.500H1.500V2.500h13V6M1.500 5h13M4.500 1v2.500M11.500 1v2.500"/><circle cx="11" cy="11.500" r="4.700" stroke-width="1.200"/><path d="M6.500 11.500h9M11 7v9M8 8.500q3 2 6 0M8 14.500q3-2 6 0" stroke-width=".9"/></svg></div>
<div class="mbtn" style="top:730px"><svg width="17" height="16" viewBox="0 0 17 16" stroke="#5a5a5a" fill="none" stroke-width="1"><path d="M.5 1.500h16v10H.5zM8.500 11.500v3M5 14.500h7"/></svg></div>
<div class="mbtn" style="top:772px"><svg width="16" height="16" viewBox="0 0 16 16" stroke="#5a5a5a" fill="none" stroke-width="1"><path d="M1.500 8L8 1.500L14.500 8M3 6.500v8h10v-8M6.500 14.500v-4.500h3v4.500M11 4.500V2.500h1.500v3.500"/></svg></div>
<div class="mbtn" style="top:811px;height:65px"><svg width="16" height="16" viewBox="0 0 16 16" stroke="#5a5a5a" fill="none" stroke-width="1"><path d="M8 3.500v9M3.500 8h9"/></svg><div style="position:absolute;left:0;top:32px;width:32px;height:1px;background:#dcdcdc"></div><svg style="top:41px" width="16" height="16" viewBox="0 0 16 16" stroke="#5a5a5a" fill="none" stroke-width="1"><path d="M3.500 8h9"/></svg></div>
<!--/MAPBTNS-->

<!-- HEADER -->
<div id="hdr" class="abs">
<svg class="abs" style="left:3px;top:5px" width="19" height="17" viewBox="0 0 19 17"><path d="M0 1.5h18M0 8.5h18M0 15.5h18" stroke="#4a4a4a" stroke-width="1" fill="none"/></svg>
<div class="ttl abs">Untitled map</div>
<div class="div abs"></div>
<div class="sig abs">Sign In</div>
</div>

<!-- RAIL -->
<div id="rail" class="abs">
<!--RAILICONS-->
<div class="act"></div>
<div class="sep" style="top:288px"></div><div class="sep" style="top:377px"></div>
<svg style="top:16px" width="16" height="16" viewBox="0 0 16 16" fill="none" stroke="#c4c4c4" stroke-width="1"><circle cx="8.500" cy="8" r="7"/><path d="M8.500 4.500v7M5 8h7"/></svg>
<svg style="top:56px" width="16" height="16" viewBox="0 0 16 16" fill="none" stroke="#c4c4c4" stroke-width="1"><path d="M8.500 1.500L15.500 5L8.500 8.500L1.500 5zM1.500 8L8.500 11.500L15.500 8M1.500 11L8.500 14.500L15.500 11"/></svg>
<svg style="top:96px" width="16" height="16" viewBox="0 0 16 16" fill="none" stroke="#c4c4c4" stroke-width="1"><path d="M0 1.500h15.500v13H0M0 5h15.500M0 8h15.500M0 11.500h15.500M5 1.500v13M10.500 1.500v13"/><path d="M0 2.500h15.500v2H0z" fill="#c4c4c4" stroke="none"/></svg>
<svg style="top:130px" width="16" height="16" viewBox="0 0 16 16" fill="none" stroke="#c4c4c4" stroke-width="1"><path d="M0 1.500h6.500v6H0M9.500 1.500h6v6h-6zM0 9.500h6.500v6H0M9.500 9.500h6v6h-6zM0 5l3 2.500M2 3.500h2M11 3.500h3v2M1.500 11.500h3v2M11 13.500h3M12.500 11.500v3"/></svg>
<svg style="top:176px" width="16" height="16" viewBox="0 0 16 16" fill="none" stroke="#c4c4c4" stroke-width="1"><path d="M5.500 2.500h9M5.500 6h9M5.500 9.500h9M5.500 13h9"/><rect x="1" y="1.500" width="2" height="2"/><circle cx="2" cy="6" r="1"/><rect x="1" y="8.500" width="2" height="2"/><path d="M1 14l1-2l1 2z"/></svg>
<svg style="top:216px" width="16" height="16" viewBox="0 0 16 16" fill="none" stroke="#c4c4c4" stroke-width="1"><path d="M3.500 .5h9v14l-4.500-3.500l-4.500 3.500z"/></svg>
<svg style="top:256px" width="16" height="16" viewBox="0 0 16 16" fill="none" stroke="#c4c4c4" stroke-width="1"><path d="M1.500 0v14.500H16"/><rect x="3.500" y="8.500" width="2" height="4"/><rect x="7.500" y="1.500" width="2" height="11"/><rect x="11.500" y="5.500" width="2" height="7"/></svg>
<svg style="top:305px" width="16" height="16" viewBox="0 0 16 16" fill="none" stroke="#c4c4c4" stroke-width="1"><path d="M1.500 14.500v-12h5l1 1.500h7.500v10.500zM1.500 6.500h13.500"/></svg>
<svg style="top:345px" width="16" height="16" viewBox="0 0 16 16" fill="none" stroke="#c4c4c4" stroke-width="1"><path d="M6.71 0.51L9.29 0.51L9.47 2.70L10.71 3.21L12.39 1.79L14.21 3.61L12.79 5.29L13.30 6.53L15.49 6.71L15.49 9.29L13.30 9.47L12.79 10.71L14.21 12.39L12.39 14.21L10.71 12.79L9.47 13.30L9.29 15.49L6.71 15.49L6.53 13.30L5.29 12.79L3.61 14.21L1.79 12.39L3.21 10.71L2.70 9.47L0.51 9.29L0.51 6.71L2.70 6.53L3.21 5.29L1.79 3.61L3.61 1.79L5.29 3.21L6.53 2.70z" stroke-linejoin="round"/><circle cx="8" cy="8" r="2.400"/></svg>
<svg style="top:394px" width="16" height="16" viewBox="0 0 16 16" fill="none" stroke="#6b6b6b" stroke-width="1"><path d="M6 2.500H1.500v12h13V11M5.500 10.500v-2q.5-4 5-4h3.500M11.500 2l2.500 2.500l-2.500 2.500"/></svg>
<svg style="top:434px" width="16" height="16" viewBox="0 0 16 16" fill="none" stroke="#6b6b6b" stroke-width="1"><path d="M5 4.500L1.500 8L5 11.500M11 4.500L14.500 8L11 11.500M9.500 2.500L6.500 13.500"/></svg>
<svg style="top:474px" width="16" height="16" viewBox="0 0 16 16" fill="none" stroke="#6b6b6b" stroke-width="1"><rect x="1.500" y="1.500" width="5" height="5"/><rect x="9.500" y="1.500" width="5" height="5"/><rect x="1.500" y="9.500" width="5" height="5"/><rect x="9.500" y="9.500" width="5" height="5"/></svg>
<svg style="top:514px" width="16" height="16" viewBox="0 0 16 16" fill="none" stroke="#ffffff" stroke-width="1.1"><path d="M4.500 6.500V.5h5l3 3v3M9.500 .5v3h3M4.500 12.500H1.500q-1 0-1-1v-4q0-1 1-1h13q1 0 1 1v4q0 1-1 1h-2.500M4.500 9.500h7.500v5.500H4.500zM6 12h4.500"/></svg>
<svg style="top:785px" width="16" height="16" viewBox="0 0 16 16" fill="none" stroke="#9a9a9a" stroke-width="1"><circle cx="8" cy="8" r="6.500"/><path d="M8 7v4.500" stroke="#e8a27a"/><circle cx="8" cy="4.800" r=".7" fill="#e8a27a" stroke="none"/></svg>
<div style="position:absolute;left:11px;top:795px;width:9px;height:9px;border-radius:5px;background:#1a8ee0"></div>
<svg style="top:824px" width="16" height="16" viewBox="0 0 16 16" fill="none" stroke="#8a8a8a" stroke-width="1"><path d="M1.500 4.500L5 8L1.500 11.500M6.500 4.500L10 8L6.500 11.500"/></svg>
<!--/RAILICONS-->
</div>

<!-- PRINT PANEL -->
<div id="panel" class="abs">
<div class="h abs">Print</div>
<svg class="abs" style="left:355px;top:20px" width="10" height="10" viewBox="0 0 10 10"><path d="M1 1l8 8M9 1l-8 8" stroke="#555" stroke-width="1" fill="none"/></svg>
<div class="hb abs"></div>
<div class="tab" style="left:0;width:118px">Layout</div>
<div class="tab" style="left:118px;width:138px">Map only</div>
<div class="tab on" style="left:255px;width:125px">Exports</div>
<!--PANELICONS-->
<svg class="abs" style="left:24px;top:114px" width="16" height="18" viewBox="0 0 16 18" fill="none" stroke="#4a4a4a" stroke-width="1"><path d="M1.500 1.500h8l4 4v11h-12zM9.500 1.500v4h4"/><path d="M4 14q2.500-2 3.500-6q.3-1.500-.3-1.500q-.8 0-.3 2q1 3.500 4.500 4.500q1 .2 1-.5q-.3-1-3-.3q-3 .6-5.400 1.800z" stroke-width=".9"/></svg>
<svg class="abs" style="left:303px;top:115px" width="16" height="16" viewBox="0 0 16 16" fill="none" stroke="#4a4a4a" stroke-width="1"><path d="M8 2.500H1.500v12h12V8M6.500 9.500l8-8M10 1.500h4.500V6"/></svg>
<svg class="abs" style="left:342px;top:118px" width="10" height="10" viewBox="0 0 10 10"><path d="M1 1l8 8M9 1l-8 8" stroke="#4a4a4a" stroke-width="1" fill="none"/></svg>
<!--/PANELICONS-->
<div class="f1 abs">Untitled map.pdf</div>
<div class="f2 abs">Open in new window.</div>
</div>

<!-- POPUP -->
<div id="pop" class="abs">
<div class="t abs">NCDOT__2024_AADT_Stations_Official_Rel<br>ease_September_2025</div>
<!--POPICONS-->
<svg class="abs" style="left:359px;top:24px" width="17" height="17" viewBox="0 0 17 17" fill="none" stroke="#5a5a5a" stroke-width="1"><path d="M5.500 6.500V.5h10.500v9.500H12.500M1.500 6.500h11v9.500h-11zM1.500 9.500h11M5.500 3h10.500"/></svg>
<svg class="abs" style="left:398px;top:28px" width="11" height="8" viewBox="0 0 11 8" fill="none" stroke="#5a5a5a" stroke-width="1.100"><path d="M1 6.500L5.500 2L10 6.500"/></svg>
<svg class="abs" style="left:434px;top:27px" width="10" height="10" viewBox="0 0 10 10"><path d="M1 1l8 8M9 1l-8 8" stroke="#5a5a5a" stroke-width="1.100" fill="none"/></svg>
<svg class="abs" style="left:13px;top:77px" width="16" height="15" viewBox="0 0 16 15" fill="none" stroke="#6a6a6a" stroke-width="1"><path d="M.5 1.500h15v12H.5zM.5 4.500h15M.5 7.500h15M.5 10.500h15M5.500 1.500v12M10.500 1.500v12"/><path d="M.5 2.500h15" stroke-width="2"/></svg>
<svg class="abs" style="left:92px;top:77px" width="17" height="17" viewBox="0 0 17 17" fill="none" stroke="#6a6a6a" stroke-width="1"><circle cx="6" cy="6" r="5"/><path d="M6 3.500v5M3.500 6h5"/><path d="M9.500 9.500l5.500 5.500" stroke-width="2" stroke-linecap="round"/><path d="M9.700 9.700l5 5" stroke="#fff" stroke-width=".6"/></svg>
<!--/POPICONS-->
<div class="d1 abs"></div>
<div class="act abs" style="left:37px">Table</div>
<div class="act abs" style="left:114px;letter-spacing:.4px">Zoom to</div>
<div class="d2 abs"></div>
<div id="tbl" class="abs"><div class="in">
<div class="row g"><b>AADT_2020</b><i>18000</i></div>
<div class="row"><b>AADT_2021</b><i>24000</i></div>
<div class="row g"><b>AADT_2022</b><i></i></div>
<div class="row"><b>AADT_2023</b><i>25000</i></div>
<div class="row g"><b>AADT_2024</b><i>26500</i></div>
<div class="row"><b>Active</b><i>1</i></div>
<div class="row g"><b>Category</b><i>VOLUME</i></div>
<div class="row"><b>Coll_Cycle</b><i>A</i></div>
<div class="row g"><b>County</b><i>Pender</i></div>
<div class="row"><b>FNC_CLS_TX</b><i>PA-Other</i></div>
<div class="row g"><b>FUNC_CLS</b><i>3.00</i></div>
<div class="row"><b>Latitude</b><i>34.46</i></div>
<div class="row g"><b>Location</b><i>US 17 north of NC 210</i></div>
<div class="row"><b>LocationID</b><i>0710000058</i></div>
<div class="row g"><b>Longitude</b><i>-77.61</i></div>
<div class="row"><b>Route</b><i>20,000,017,071.00</i></div>
<div class="row g"><b>RTE_CLS</b><i>2.00</i></div>
<div class="row"><b>RTE_CLS_TX</b><i>US</i></div>
</div></div>
<div id="sb" class="abs">
<svg class="abs" style="left:3px;top:6px" width="9" height="7" viewBox="0 0 9 7"><path d="M4.5 0.5L8.5 6.5H0.5z" fill="#7a7a7a"/></svg>
<div class="th"></div>
<svg class="abs" style="left:3px;top:531px" width="9" height="7" viewBox="0 0 9 7"><path d="M0.5 0.5H8.5L4.5 6.5z" fill="#7a7a7a"/></svg>
</div>
</div>

<!-- WATERMARK -->
<div id="wm" class="abs">©2026 Hive MLS</div>
</body>
</html>
